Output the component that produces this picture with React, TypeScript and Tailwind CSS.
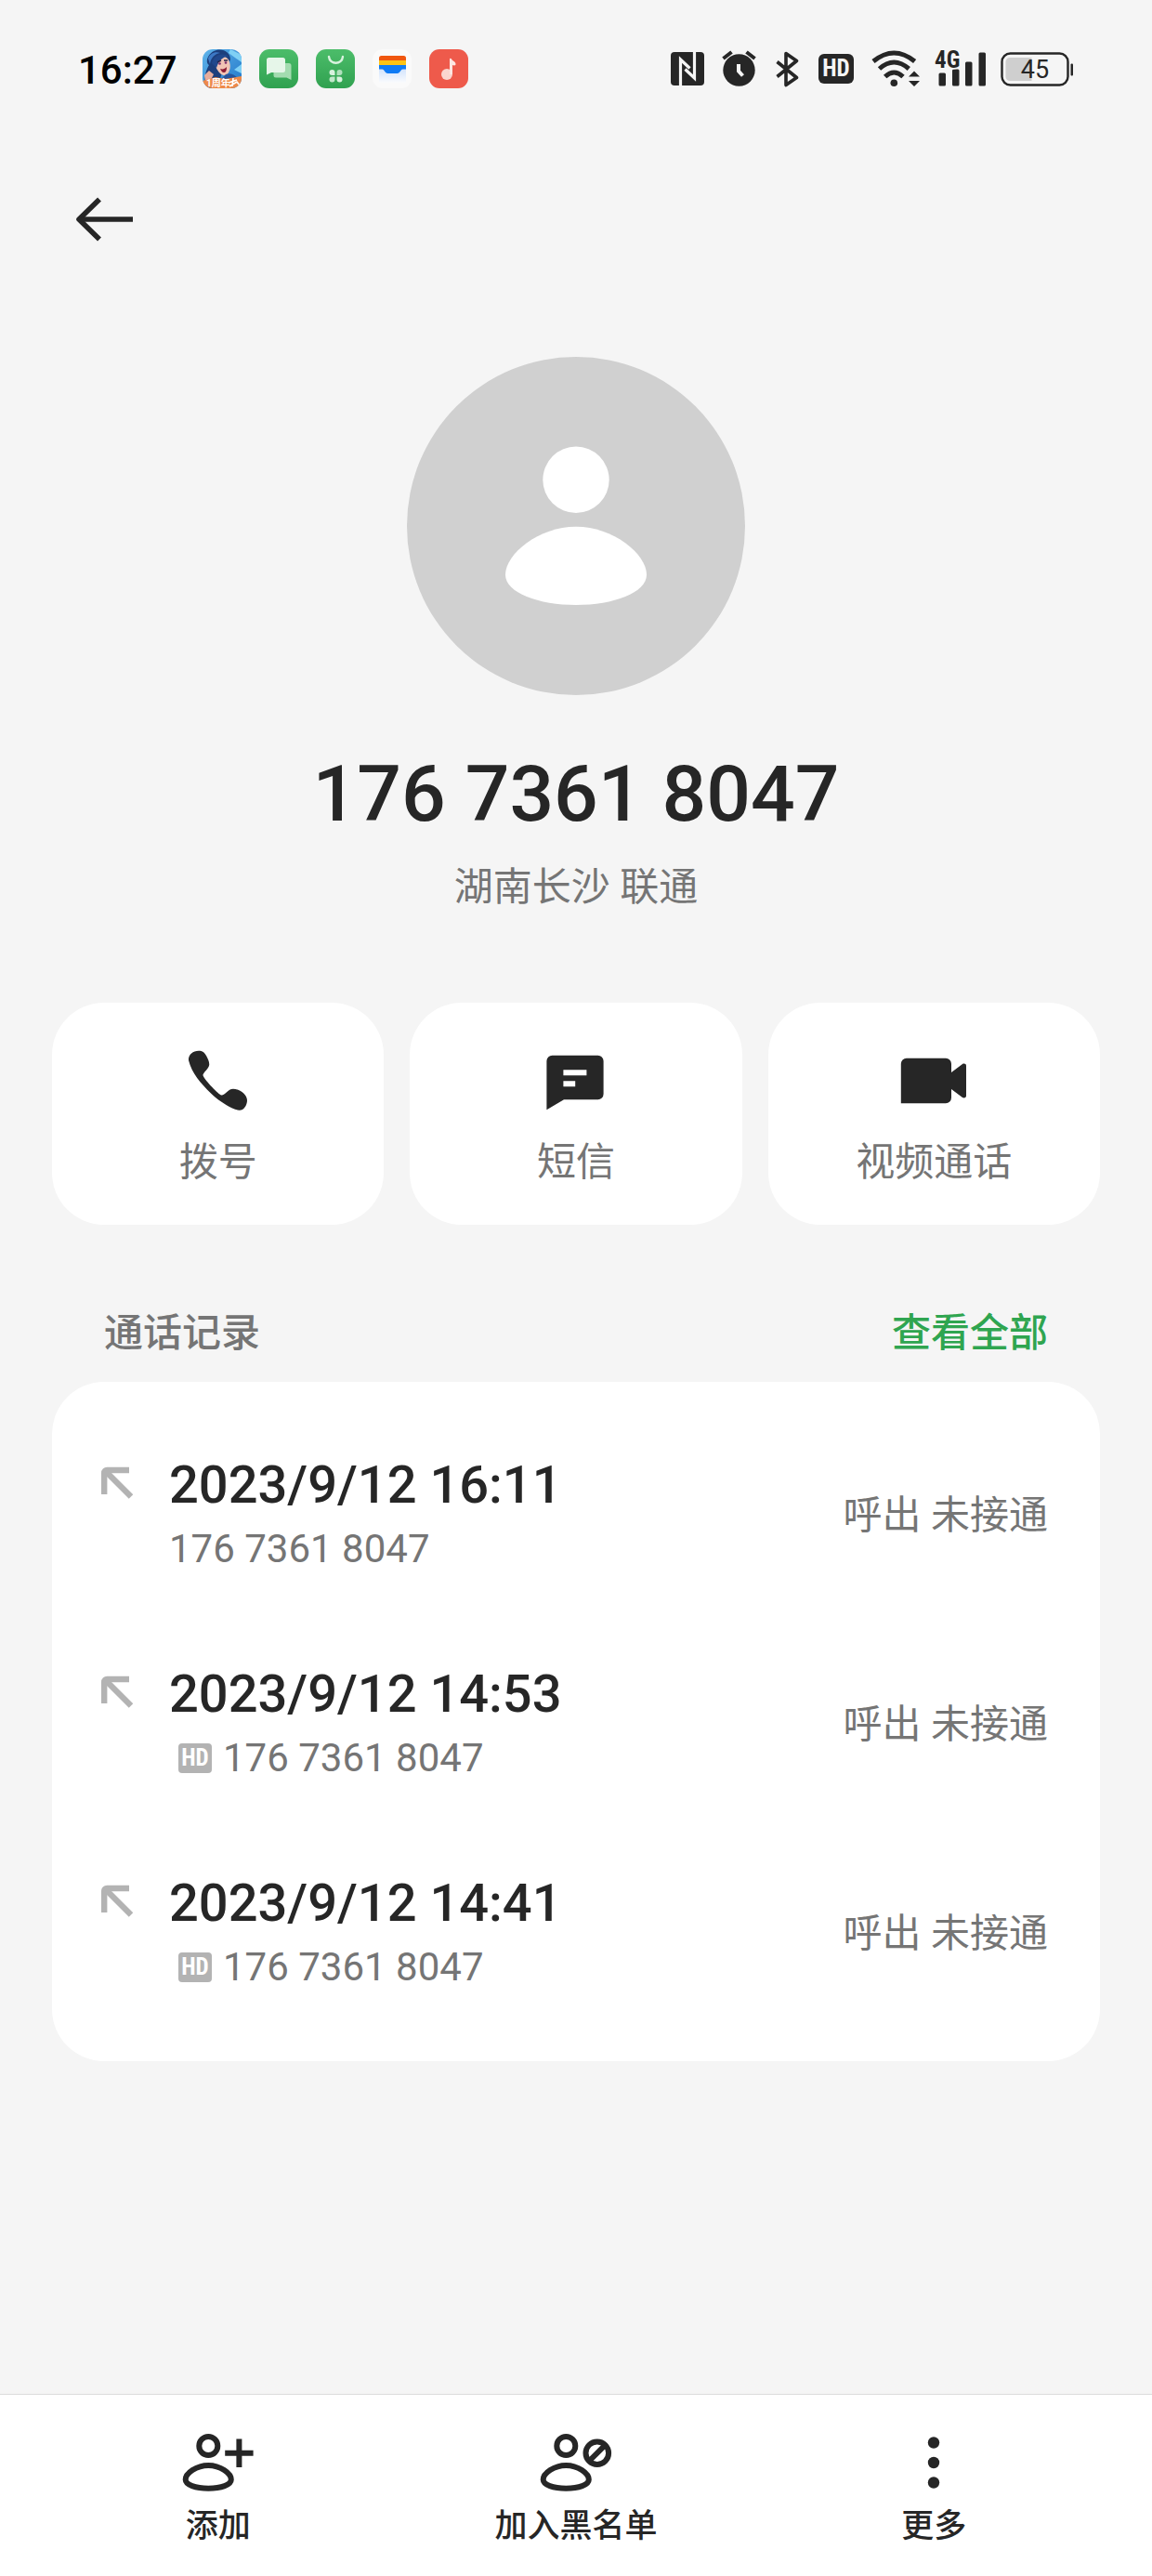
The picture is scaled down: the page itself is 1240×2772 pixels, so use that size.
import type { ReactNode } from "react";

/* ── Data ── */
const PHONE = "176 7361 8047";

const CALLS = [
  { time: "2023/9/12 16:11", hd: false, status: "呼出 未接通" },
  { time: "2023/9/12 14:53", hd: true, status: "呼出 未接通" },
  { time: "2023/9/12 14:41", hd: true, status: "呼出 未接通" },
];

/* ── Notification app icons ── */
function GameIcon() {
  return (
    <svg width="42" height="42" viewBox="0 0 42 42" aria-hidden="true">
      <defs>
        <clipPath id="game-clip">
          <rect width="42" height="42" rx="11" />
        </clipPath>
        <linearGradient id="game-sky" x1="0" y1="0" x2="1" y2="1">
          <stop offset="0" stopColor="#5fb4ea" />
          <stop offset="1" stopColor="#2277c9" />
        </linearGradient>
      </defs>
      <g clipPath="url(#game-clip)">
        <rect width="42" height="42" fill="url(#game-sky)" />
        <path d="M30 0l12 6v8L28 4zM34 22l8-6v10z" fill="#7fd0f5" />
        <path d="M3 42C1 30 4 22 7 17 2 14 6 3 15 1c8-2 15 3 15 10l-4 9-6 8-4 14z" fill="#1d3f7c" />
        <path d="M6 10c2-6 8-8 13-6-6 1-10 5-11 12z" fill="#3c78c4" />
        <path d="M14 12c2-5 9-6 13-2 3 4 4 10 1 15-2 4-6 4-9 1-4-4-6-9-5-14z" fill="#f2c4b4" />
        <path d="M10 15C12 6 22 3 28 8c-6 0-10 3-13 12z" fill="#21488c" />
        <path d="M16 14l4-2M23 12l4 0" stroke="#27264a" strokeWidth="1.6" />
        <circle cx="18.500" cy="15.500" r="1.300" fill="#7b2c6b" />
        <circle cx="25" cy="14.500" r="1.300" fill="#7b2c6b" />
        <path d="M19 21c3 1 5 0 7-2 0 4-1 6-3 6s-3-2-4-4z" fill="#8c1d36" />
        <path d="M2 28l5-5 5 4-3 6-6 1z" fill="#e6ac9c" />
        <path d="M25 27c5-2 10 0 13 5H20z" fill="#27549c" />
        <path d="M0 34l14-4 10 2 18-3v13H0z" fill="#ee8a4a" />
        <text x="4" y="40" fontSize="10" fontWeight="700" fill="#fff">1周年</text>
        <path d="M28 36l9-3M33 31l-1 9M29 40l8-5 3 4" stroke="#fff" strokeWidth="1.600" fill="none" />
      </g>
    </svg>
  );
}

function MessagesAppIcon() {
  return (
    <svg width="42" height="42" viewBox="0 0 42 42" aria-hidden="true">
      <defs>
        <linearGradient id="app-green" x1="0" y1="0" x2="0" y2="1">
          <stop offset="0" stopColor="#4cbd6a" />
          <stop offset="1" stopColor="#30a150" />
        </linearGradient>
      </defs>
      <rect width="42" height="42" rx="11" fill="url(#app-green)" />
      <path d="M18 15h14a2.500 2.500 0 0 1 2.500 2.500V33l-5-2.500H18a2.500 2.500 0 0 1-2.500-2.500V17.500A2.500 2.500 0 0 1 18 15z" fill="#a3dcb0" />
      <path d="M10.500 9h15A2.500 2.500 0 0 1 28 11.500v11a2.500 2.500 0 0 1-2.500 2.500H13l-5 2.500v-16A2.500 2.500 0 0 1 10.500 9z" fill="#e6f6e9" />
    </svg>
  );
}

function MarketAppIcon() {
  return (
    <svg width="42" height="42" viewBox="0 0 42 42" aria-hidden="true">
      <rect width="42" height="42" rx="11" fill="url(#app-green)" />
      <path d="M14 8c1 9 14 9 15 0" fill="none" stroke="#d8f2de" strokeWidth="2.400" strokeLinecap="round" />
      <g fill="#d8f2de">
        <path d="M20.500 28v-3a3 3 0 1 0-3 3z" />
        <path d="M22.500 28v-3a3 3 0 1 1 3 3z" opacity=".75" />
        <path d="M20.500 29.500v3a3 3 0 1 1-3-3z" opacity=".85" />
        <path d="M22.500 29.500v3a3 3 0 1 0 3-3z" />
      </g>
    </svg>
  );
}

function WalletAppIcon() {
  return (
    <svg width="42" height="42" viewBox="0 0 42 42" aria-hidden="true">
      <defs>
        <linearGradient id="wallet-fade" x1="0" y1="0" x2="0" y2="1">
          <stop offset="0" stopColor="#cfe2fd" />
          <stop offset="1" stopColor="#fafbfd" />
        </linearGradient>
      </defs>
      <rect width="42" height="42" rx="11" fill="#fafafa" />
      <path d="M7 20h29v16H7z" fill="url(#wallet-fade)" />
      <path d="M7 12V9.500A2.500 2.500 0 0 1 9.500 7h24A2.500 2.500 0 0 1 36 9.500V12z" fill="#f0570f" />
      <path d="M7 12h29v5H7z" fill="#fcc314" />
      <path d="M7 17h29v4.500h-3.500c-2.500 0-2.500 4.500-6 4.500h-10c-3.500 0-3.500-4.500-6-4.500H7z" fill="#0f7bf5" />
    </svg>
  );
}

function MusicAppIcon() {
  return (
    <svg width="42" height="42" viewBox="0 0 42 42" aria-hidden="true">
      <rect width="42" height="42" rx="11" fill="#ee5a4b" />
      <circle cx="19" cy="27" r="6" fill="#fbd5cf" />
      <path d="M22 10.500c0-1 1.500-1 2 0 1 2.500 4.500 2.500 4.500 5.500 0 2-2.500 1.500-3.500 1v10h-3z" fill="#fde6e2" />
    </svg>
  );
}

/* ── System status icons ── */
function NfcIcon() {
  return (
    <svg width="36" height="36" viewBox="0 0 36 36" aria-hidden="true">
      <rect width="36" height="36" rx="4" fill="#262626" />
      <path d="M10.500 37V8l10 9.500M25.500-1v29l-10-9.500" fill="none" stroke="#f5f5f5" strokeWidth="3.200" />
    </svg>
  );
}

function AlarmIcon() {
  return (
    <svg width="38" height="40" viewBox="0 0 38 40" aria-hidden="true">
      <circle cx="18.500" cy="21.500" r="17.200" fill="#262626" />
      <path d="M1.500 9l9-7M26.500 2l9 7" stroke="#262626" strokeWidth="4" />
      <path d="M18 15v7.500l4.500 5" fill="none" stroke="#f5f5f5" strokeWidth="4" />
    </svg>
  );
}

function BluetoothIcon() {
  return (
    <svg width="28" height="40" viewBox="-1 -1 28 40" aria-hidden="true">
      <path d="M1.500 11.500L22.500 28.500 11 36.500V2.500l11.500 8L1.500 27.500" fill="none" stroke="#262626" strokeWidth="3.600" strokeLinejoin="round" />
    </svg>
  );
}

function HdStatusIcon() {
  return (
    <span className="flex h-8 w-[38px] items-center justify-center rounded-md bg-[#262626] font-['Roboto_Condensed',Roboto,sans-serif] text-[25px] leading-8 font-bold text-[#f5f5f5]">
      HD
    </span>
  );
}

function WifiIcon() {
  return (
    <svg width="53" height="40" viewBox="0 0 53 40" aria-hidden="true">
      <g fill="none" stroke="#262626" strokeWidth="5">
        <path d="M2 12Q24.300-6 46.600 12" />
        <path d="M8.500 20Q24.300 6 40.300 20" />
        <path d="M14.700 28.500Q24.300 19.500 34 28.500" />
      </g>
      <circle cx="24.300" cy="35.300" r="3.800" fill="#262626" />
      <path d="M46 22.500l6 6H40zM40 33h12l-6 6z" fill="#262626" />
    </svg>
  );
}

function SignalIcon() {
  return (
    <svg width="54" height="40" viewBox="0 0 54 40" className="overflow-visible" aria-hidden="true">
      <g fill="#262626">
        <rect x="3.500" y="24.500" width="7.500" height="14" rx="1.500" />
        <rect x="18" y="20.500" width="7.500" height="18" rx="1.500" />
        <rect x="32" y="12.500" width="7.500" height="26" rx="1.500" />
        <rect x="46.500" y="2.500" width="7.500" height="36" rx="1.500" />
      </g>
      <text
        x="-1"
        y="19"
        className="font-['Roboto_Condensed',Roboto,sans-serif]"
        fontSize="25"
        fontWeight="700"
        fill="#262626"
        stroke="#f5f5f5"
        strokeWidth="3"
        paintOrder="stroke"
      >
        4G
      </text>
    </svg>
  );
}

function BatteryIcon() {
  return (
    <svg width="79" height="37" viewBox="0 0 79 37" aria-hidden="true">
      <rect x="1.500" y="1.500" width="71" height="34" rx="9" fill="none" stroke="#262626" strokeWidth="2.400" />
      <path d="M10 6h23.500v25H10a4.500 4.500 0 0 1-4.500-4.500v-16A4.500 4.500 0 0 1 10 6z" fill="#cfcfcf" />
      <rect x="75.500" y="12.500" width="2.500" height="13" rx="1" fill="#262626" />
      <text x="37" y="28" textAnchor="middle" fontSize="27" fill="#262626">45</text>
    </svg>
  );
}

/* ── Page icons ── */
function BackIcon() {
  return (
    <svg width="64" height="64" viewBox="0 0 64 64" fill="none" stroke="#262626" strokeWidth="5.600" aria-hidden="true">
      <path d="M27 10.500L5 32l22 21.500" strokeLinejoin="round" />
      <path d="M5 32h58" />
    </svg>
  );
}

function AvatarIcon() {
  return (
    <svg width="364" height="364" viewBox="0 0 364 364" role="img" aria-label="联系人头像">
      <circle cx="182" cy="182" r="182" fill="#d0d0d0" />
      <circle cx="182" cy="132.300" r="35.700" fill="#fff" />
      <path d="M182 182.700C222 182.700 258 212 258 234.500C258 254 222 267 182 267S106 254 106 234.500C106 212 142 182.700 182 182.700Z" fill="#fff" />
    </svg>
  );
}

function DialIcon() {
  return (
    <svg width="72" height="72" viewBox="0 0 72 72" fill="#262626" aria-hidden="true">
      <path d="M4 14C3.500 8 8.500 3.700 14.800 3.700C19 3.700 21 5.500 23 9C25 12.500 26.500 16 26.200 19C26 22.500 20 27 19.400 30C20.500 34 34 48.500 39 51.500C43 52.200 46 44.800 52 44.700C59 44.700 67 51 67 57C67 61.500 64.500 65.500 62 67C59 68.500 55 67.500 51 65.500C43 61.500 34 55.500 28 49.500C17 38.500 7.500 28 4 14Z" />
    </svg>
  );
}

function SmsIcon() {
  return (
    <svg width="72" height="72" viewBox="0 0 72 72" aria-hidden="true">
      <path d="M10.400 8.700h49.200a6 6 0 0 1 6 6v35.600a6 6 0 0 1-6 6H23L4.400 67.300V14.700a6 6 0 0 1 6-6z" fill="#262626" />
      <path d="M22.400 24.300h25v6h-25zM22.400 36.200h12.800v6H22.400z" fill="#fff" />
    </svg>
  );
}

function VideoIcon() {
  return (
    <svg width="72" height="72" viewBox="0 0 72 72" fill="#262626" aria-hidden="true">
      <path d="M6.800 11.700H49a6 6 0 0 1 6 6V27l12-9c2-1 4 0 4 1.800v32.400c0 1.800-2 2.800-4 1.800l-12-9v9.300a6 6 0 0 1-6 6H.800V17.700a6 6 0 0 1 6-6z" />
    </svg>
  );
}

function OutgoingIcon() {
  return (
    <svg width="36" height="36" viewBox="0 0 36 36" fill="none" stroke="#b3b3b3" strokeWidth="6.400" aria-hidden="true">
      <path d="M4.200 30V7a3 3 0 0 1 3-3H31" />
      <path d="M6 5.500L33 32.500" />
    </svg>
  );
}

/* Head and shoulders outline shared by both contact actions */
function PersonOutline({ children }: { children: ReactNode }) {
  return (
    <svg width="80" height="72" viewBox="0 0 80 72" fill="none" stroke="#262626" strokeWidth="6" aria-hidden="true">
      <circle cx="29.300" cy="18" r="10" />
      <path d="M29.300 39C42 39 53.800 47.500 53.800 54.300C53.800 60 43 63.700 29.300 63.700S4.700 60 4.700 54.300C4.700 47.500 16.500 39 29.300 39Z" />
      {children}
    </svg>
  );
}

function MoreIcon() {
  return (
    <svg width="80" height="72" viewBox="0 0 80 72" fill="#262626" aria-hidden="true">
      <circle cx="40" cy="14.500" r="6.200" />
      <circle cx="40" cy="36" r="6.200" />
      <circle cx="40" cy="57.500" r="6.200" />
    </svg>
  );
}

const ACTIONS = [
  { label: "拨号", icon: <DialIcon /> },
  { label: "短信", icon: <SmsIcon /> },
  { label: "视频通话", icon: <VideoIcon /> },
];

const TOOLS = [
  {
    label: "添加",
    icon: (
      <PersonOutline>
        <path d="M47.200 25.700h30.400M62.400 10.500v30.400" />
      </PersonOutline>
    ),
  },
  {
    label: "加入黑名单",
    icon: (
      <PersonOutline>
        <circle cx="62.800" cy="25.700" r="12.300" />
        <path d="M54 34.500l17.600-17.600" />
      </PersonOutline>
    ),
  },
  { label: "更多", icon: <MoreIcon /> },
];

export default function App() {
  return (
    <div className="flex min-h-screen flex-col bg-[#f5f5f5] font-[Roboto,'Noto_Sans_CJK_SC',sans-serif] text-[#262626]">
      {/* ── Status bar ── */}
      <div className="flex h-[148px] items-center justify-between px-[84px]">
        <div className="flex items-center gap-[19px]">
          <span className="mt-1 mr-2 text-[42px] leading-[48px] font-medium text-black">16:27</span>
          <GameIcon />
          <MessagesAppIcon />
          <MarketAppIcon />
          <WalletAppIcon />
          <MusicAppIcon />
        </div>
        <div className="flex items-center gap-[19px]">
          <NfcIcon />
          <AlarmIcon />
          <BluetoothIcon />
          <HdStatusIcon />
          <div className="flex items-center gap-4">
            <WifiIcon />
            <SignalIcon />
            <BatteryIcon />
          </div>
        </div>
      </div>

      {/* ── Toolbar ── */}
      <header className="flex h-[176px] items-center px-20">
        <button type="button" aria-label="返回">
          <BackIcon />
        </button>
      </header>

      <main className="flex flex-col px-14 pb-14">
        {/* ── Contact ── */}
        <section className="flex flex-col items-center pt-[60px]">
          <AvatarIcon />
          <h1 className="mt-[58px] text-[84px] leading-[98px] font-medium">{PHONE}</h1>
          <p className="mt-[27px] text-[42px] leading-[48px] text-[#757575]">湖南长沙 联通</p>
        </section>

        {/* ── Quick actions ── */}
        <div className="mt-[100px] grid grid-cols-3 gap-7">
          {ACTIONS.map((a) => (
            <button
              key={a.label}
              type="button"
              className="flex flex-col items-center gap-7 rounded-[56px] bg-white pt-12 pb-[43px] text-[42px] leading-[48px] text-[#757575]"
            >
              {a.icon}
              {a.label}
            </button>
          ))}
        </div>

        {/* ── Call history ── */}
        <div className="mt-[93px] mb-7 flex items-center justify-between px-14 text-[42px] leading-[48px]">
          <h2 className="font-medium text-[#757575]">通话记录</h2>
          <a href="#all" className="font-medium text-[#2fa550]">查看全部</a>
        </div>
        <ul className="rounded-[56px] bg-white py-7">
          {CALLS.map((c) => (
            <li key={c.time} className="flex items-center justify-between pt-[50px] pr-14 pb-[49px] pl-[52px]">
              <div className="flex gap-[38px]">
                <span className="pt-[13px]">
                  <OutgoingIcon />
                </span>
                <div className="flex flex-col gap-3">
                  <span className="text-[56px] leading-[66px] font-medium">{c.time}</span>
                  <span className="flex items-center gap-3 text-[42px] leading-[48px] text-[#757575]">
                    {c.hd && (
                      <span className="ml-[10px] flex h-8 w-9 items-center justify-center rounded-sm bg-[#b3b3b3] font-['Roboto_Condensed',Roboto,sans-serif] text-[25px] leading-8 font-bold text-white">
                        HD
                      </span>
                    )}
                    {PHONE}
                  </span>
                </div>
              </div>
              <span className="mt-1.5 text-[42px] leading-[48px] text-[#757575]">{c.status}</span>
            </li>
          ))}
        </ul>
      </main>

      {/* ── Bottom tools ── */}
      <nav className="mt-auto grid grid-cols-3 border-t border-[#dcdcdc] bg-white px-[42px] pt-[37px] pb-[33px]">
        {TOOLS.map((t) => (
          <button key={t.label} type="button" className="flex flex-col items-center gap-[13px] text-[35px] leading-10 font-medium">
            {t.icon}
            {t.label}
          </button>
        ))}
      </nav>
    </div>
  );
}
